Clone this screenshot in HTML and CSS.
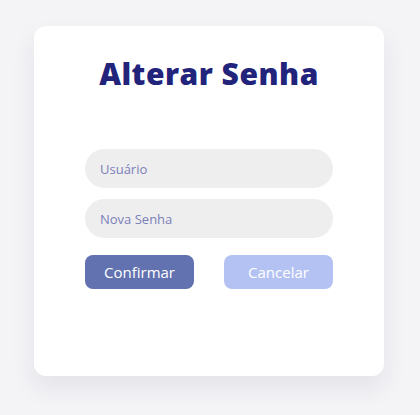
FILE: index.html
```html
<!DOCTYPE html>
<html lang="pt">
<head>
<meta charset="utf-8">
<link rel="stylesheet" href="styles.css">
</head>
<body>
<div class="page">
  <div class="card">
    <h1 class="title">Alterar Senha</h1>
    <form class="form">
      <input class="field" type="text" placeholder="Usuário">
      <input class="field" type="password" placeholder="Nova Senha">
      <div class="actions">
        <button type="button" class="btn btn-primary">Confirmar</button>
        <button type="button" class="btn btn-secondary">Cancelar</button>
      </div>
    </form>
  </div>
</div>
</body>
</html>
```
FILE: styles.css
```css
* { box-sizing: border-box; }
html, body { margin: 0; padding: 0; }
body {
  background: #f4f4f7;
  width: 420px;
  height: 415px;
  overflow: hidden;
  font-family: "Open Sans", "Noto Sans", sans-serif;
}
.page {
  padding: 26px 0 0 34px;
}
.card {
  width: 350px;
  height: 350px;
  background: #ffffff;
  border-radius: 12px;
  box-shadow: 0 12px 24px rgba(40, 40, 70, 0.08);
  padding: 0 51px;
}
.title {
  margin: 0;
  padding-top: 28px;
  height: 123px;
  text-align: center;
  font-family: "Open Sans", sans-serif;
  font-weight: 800;
  font-size: 30px;
  letter-spacing: 0.5px;
  line-height: 40px;
  color: #22237a;
}
.form {
  display: flex;
  flex-direction: column;
  gap: 11px;
}
.field {
  width: 248px;
  height: 39px;
  border: none;
  border-radius: 20px;
  background: #eeeeee;
  padding: 0 15px;
  font-family: "Open Sans", sans-serif;
  font-size: 13px;
  color: #333;
  outline: none;
}
.field::placeholder {
  color: #7b80ba;
}
.actions {
  display: flex;
  justify-content: space-between;
  margin-top: 6px;
}
.btn {
  width: 109px;
  height: 34px;
  border: none;
  border-radius: 8px;
  color: #ffffff;
  font-family: "Open Sans", sans-serif;
  font-size: 15px;
  cursor: pointer;
}
.btn-primary { background: #6272b1; }
.btn-secondary { background: #b4c2f3; }
```
